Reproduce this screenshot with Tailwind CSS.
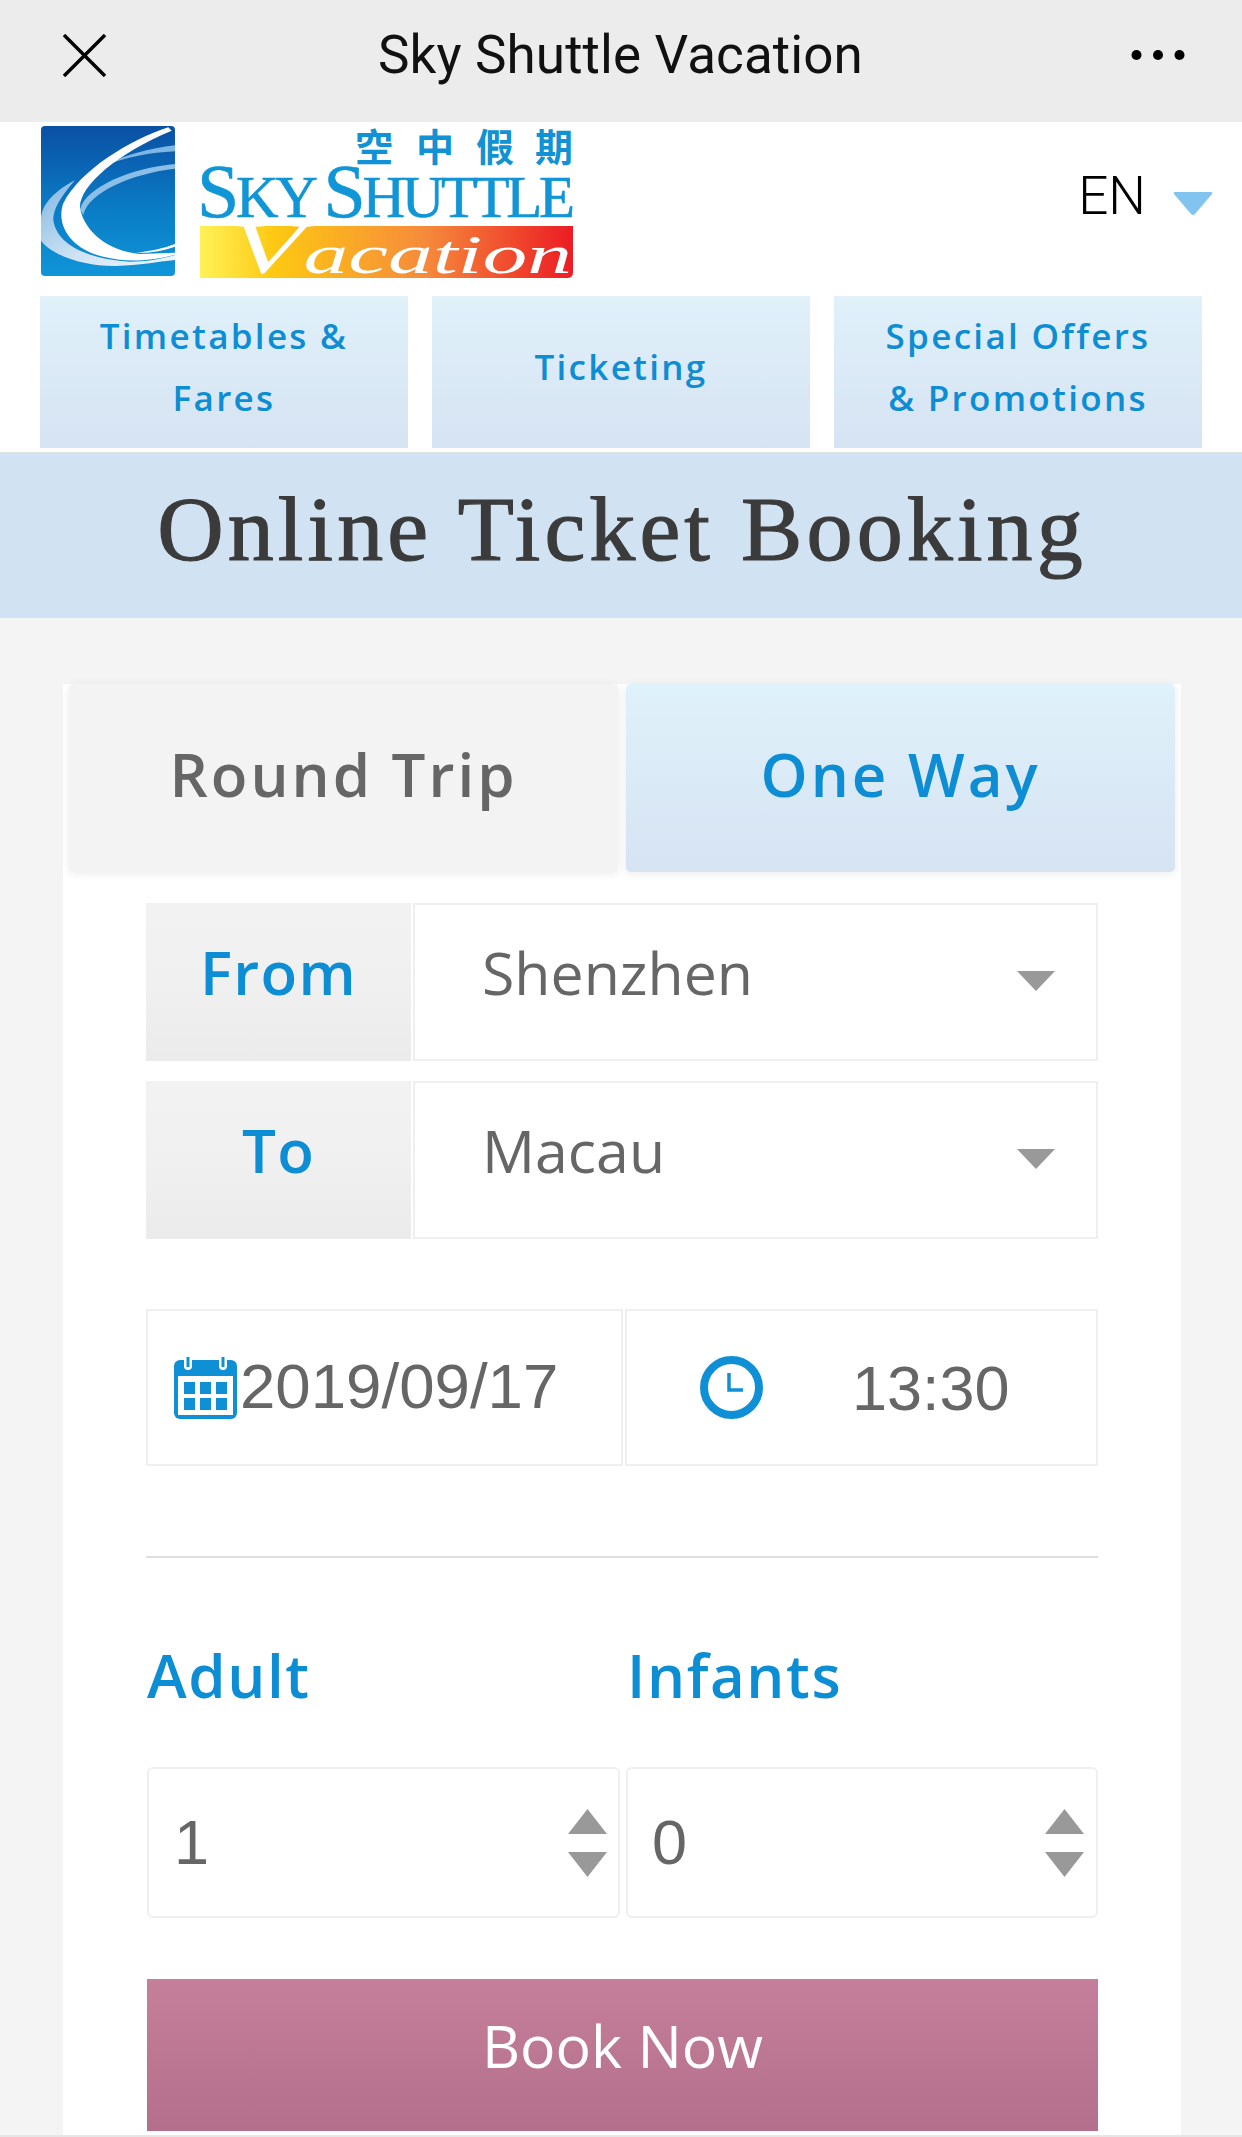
<!DOCTYPE html>
<html>
<head>
<meta charset="utf-8">
<script src="https://cdn.jsdelivr.net/npm/@tailwindcss/browser@4"></script>
</head>
<body class="m-0">
<div class="w-[1242px] h-[2137px] overflow-hidden flex flex-col bg-[#f4f4f4] font-['Open_Sans',sans-serif]">
  <!-- top bar -->
  <div class="h-[122px] shrink-0 bg-[#ececec] flex items-center justify-between pl-[63px] pr-[57px]">
    <svg class="w-[43px] h-[43px] mb-[12px]" viewBox="0 0 43 43"><path d="M1 1L42 42M42 1L1 42" stroke="#000" stroke-width="3.4" fill="none"/></svg>
    <div class="font-['Roboto',sans-serif] text-[53px] tracking-[0.1px] leading-none text-[#111] mb-[12px] ml-[4px]">Sky Shuttle Vacation</div>
    <svg class="w-[54px] h-[12px] mb-[12px]" viewBox="0 0 54 12"><circle cx="5.5" cy="6" r="5" fill="#000"/><circle cx="27" cy="6" r="5" fill="#000"/><circle cx="48.5" cy="6" r="5" fill="#000"/></svg>
  </div>
  <!-- logo row -->
  <div class="h-[174px] shrink-0 bg-white flex items-start justify-between pl-[41px] pr-[29px] pt-[4px]">
    <svg class="overflow-visible" width="534" height="154" viewBox="41 126 534 154">
      <defs>
        <linearGradient id="sq" x1="0" y1="0" x2="0" y2="1"><stop offset="0" stop-color="#0a50a4"/><stop offset=".55" stop-color="#0a7cc5"/><stop offset="1" stop-color="#1095d9"/></linearGradient>
        <linearGradient id="lb" x1="0" y1="0" x2="1" y2="1"><stop offset="0" stop-color="#7fb6e2"/><stop offset=".6" stop-color="#d2e5f4"/><stop offset="1" stop-color="#eef6fb"/></linearGradient>
        <linearGradient id="band" x1="0" y1="0" x2="1" y2="0"><stop offset="0" stop-color="#fff258"/><stop offset=".2" stop-color="#fdc812"/><stop offset=".6" stop-color="#f68b3b"/><stop offset="1" stop-color="#ec1c24"/></linearGradient>
      </defs>
      <g transform="translate(30 120) scale(.3333)">
        <rect x="33" y="18" width="402" height="450" rx="12" fill="url(#sq)"/>
        <path d="M135 180C80 210 33 250 33 300L33 362C70 410 170 440 260 438C330 436 380 425 435 420L435 405C390 418 350 425 300 425C190 420 80 380 70 300C70 270 85 240 135 180Z" fill="url(#lb)"/>
        <path d="M215 140C280 105 360 85 435 76L435 94C360 98 290 110 215 140Z" fill="#7db6e4"/>
        <path d="M150 268C170 200 300 145 435 132L435 146C310 160 175 215 160 285Z" fill="#8cbfe8"/>
        <path d="M415 22C300 60 150 150 100 250C75 320 130 390 220 410C280 425 340 428 435 404L435 398L330 402C240 395 165 340 150 265C145 200 260 100 425 32Z" fill="#fff"/>
        <path d="M318 398C370 392 400 385 435 372L435 380C400 392 360 400 318 398Z" fill="#fff"/>
      </g>
      <text x="355 416 476 535" y="161" font-family="'Noto Sans CJK TC',sans-serif" font-size="38" font-weight="700" fill="#1192d4">空中假期</text>
      <text x="197" y="217" textLength="378" lengthAdjust="spacing" font-family="'Liberation Serif',serif" fill="#1095d6" stroke="#1095d6" stroke-width=".6" font-size="59"><tspan font-size="76">S</tspan>KY <tspan font-size="76">S</tspan>HUTTLE</text>
      <path d="M200 226H573V272Q573 278 567 278H200Z" fill="url(#band)"/>
      <text x="230" y="273" textLength="342" lengthAdjust="spacingAndGlyphs" font-family="'Liberation Serif',serif" font-style="italic" fill="#fff" font-size="55"><tspan font-size="74">V</tspan>acation</text>
    </svg>
    <div class="flex items-center mt-[44px]">
      <span class="font-['Roboto',sans-serif] font-light text-[53px] leading-none text-black">EN</span>
      <svg class="w-[40px] h-[25px] ml-[27px] mt-[13px]" viewBox="0 0 40 25"><path d="M2 1H38Q40 1 39 3L22 23Q20 25 18 23L1 3Q0 1 2 1Z" fill="#82c4f0"/></svg>
    </div>
  </div>
  <!-- nav -->
  <div class="shrink-0 bg-white pl-[40px] flex gap-[24px] h-[152px]">
    <div class="w-[368px] bg-gradient-to-b from-[#e0f1fa] to-[#d6e3f3] flex items-center justify-center text-center text-[#0d8dd3] text-[35px] leading-[62px] font-semibold tracking-[2.3px] pb-[10px]">Timetables &amp;<br>Fares</div>
    <div class="w-[378px] bg-gradient-to-b from-[#e0f1fa] to-[#d6e3f3] flex items-center justify-center text-center text-[#0d8dd3] text-[35px] leading-[62px] font-semibold tracking-[2.3px] pb-[10px]">Ticketing</div>
    <div class="w-[368px] bg-gradient-to-b from-[#e0f1fa] to-[#d6e3f3] flex items-center justify-center text-center text-[#0d8dd3] text-[35px] leading-[62px] font-semibold tracking-[2.3px] pb-[10px]">Special Offers<br>&amp; Promotions</div>
  </div>
  <div class="h-[5px] shrink-0 bg-white border-b border-[#e2e2e2]"></div>
  <!-- heading -->
  <div class="h-[165px] shrink-0 bg-[#d1e3f2] flex items-center justify-center">
    <h1 class="font-['Liberation_Serif',serif] text-[92px] leading-none text-[#3b3b3b] tracking-[4.1px] mb-[14px] ml-[2px] [-webkit-text-stroke:1.2px_#3b3b3b]">Online Ticket Booking</h1>
  </div>
  <!-- card -->
  <div class="flex-1 mt-[66px] ml-[63px] mr-[61px] bg-white flex flex-col">
    <div class="flex gap-[8px] px-[6px]">
      <div class="w-[549px] h-[188px] rounded-[5px] bg-[#f3f3f3] shadow-[0_2px_10px_rgba(0,0,0,0.08)] flex items-center justify-center text-[60px] font-semibold text-[#666] tracking-[3px] pb-[8px]">Round Trip</div>
      <div class="w-[549px] h-[188px] rounded-[5px] bg-gradient-to-b from-[#dff1fa] to-[#d6e3f3] shadow-[0_2px_10px_rgba(0,0,0,0.08)] flex items-center justify-center text-[60px] font-semibold text-[#0d8dd3] tracking-[3px] pb-[8px]">One Way</div>
    </div>
    <div class="px-[83px] flex flex-col flex-1">
      <div class="flex mt-[31px] h-[158px] gap-[2px]">
        <div class="w-[265px] bg-gradient-to-b from-[#f2f2f2] via-[#f0f0f0] to-[#ebebeb] flex items-center justify-center text-[60px] font-semibold tracking-[1.3px] text-[#0d8dd3] pb-[20px]">From</div>
        <div class="flex-1 border-2 border-[#efefef] flex items-center justify-between pl-[67px] pr-[41px]">
          <span class="text-[59px] text-[#666] pb-[20px]">Shenzhen</span>
          <svg class="w-[38px] h-[20px] mb-[2px]" viewBox="0 0 38 20"><path d="M0 0H38L19 20Z" fill="#999"/></svg>
        </div>
      </div>
      <div class="flex mt-[20px] h-[158px] gap-[2px]">
        <div class="w-[265px] bg-gradient-to-b from-[#f2f2f2] via-[#f0f0f0] to-[#ebebeb] flex items-center justify-center text-[60px] font-semibold tracking-[1.3px] text-[#0d8dd3] pb-[20px]">To</div>
        <div class="flex-1 border-2 border-[#efefef] flex items-center justify-between pl-[67px] pr-[41px]">
          <span class="text-[59px] text-[#666] pb-[20px]">Macau</span>
          <svg class="w-[38px] h-[20px] mb-[2px]" viewBox="0 0 38 20"><path d="M0 0H38L19 20Z" fill="#999"/></svg>
        </div>
      </div>
      <div class="flex mt-[70px] h-[157px] gap-[2px] font-['Liberation_Sans',sans-serif] text-[63px] text-[#666]">
        <div class="w-[477px] border-2 border-[#efefef] flex items-center pl-[26px]">
          <svg class="w-[63px] h-[62px] shrink-0" viewBox="0 0 63 62">
            <rect x="0" y="3" width="63" height="59" rx="6" fill="#0f90d6"/>
            <rect x="4" y="19" width="55" height="39" fill="#fff"/>
            <g fill="#0f90d6">
              <rect x="10" y="25" width="11" height="12"/><rect x="26" y="25" width="11" height="12"/><rect x="42" y="25" width="11" height="12"/>
              <rect x="10" y="41" width="11" height="12"/><rect x="26" y="41" width="11" height="12"/><rect x="42" y="41" width="11" height="12"/>
            </g>
            <rect x="10" y="0" width="8" height="13" rx="4" fill="#fff"/><rect x="12.5" y="0" width="3" height="10" fill="#0f90d6"/>
            <rect x="45" y="0" width="8" height="13" rx="4" fill="#fff"/><rect x="47.5" y="0" width="3" height="10" fill="#0f90d6"/>
          </svg>
          <span class="ml-[3px] pb-[4px] text-[63.6px]">2019/09/17</span>
        </div>
        <div class="flex-1 border-2 border-[#efefef] flex items-center pl-[73px]">
          <svg class="w-[63px] h-[63px] shrink-0" viewBox="0 0 63 63"><circle cx="31.5" cy="31.5" r="27.5" fill="none" stroke="#0f90d6" stroke-width="8"/><path d="M29 17V34H43" fill="none" stroke="#0f90d6" stroke-width="3.5"/></svg>
          <span class="ml-[89px] pt-[2px]">13:30</span>
        </div>
      </div>
      <div class="mt-[90px] h-[2px] bg-[#dedede]"></div>
      <div class="grid grid-cols-[473px_1fr] gap-[6px] ml-[1px] mt-[76px] text-[60px] leading-[82px] font-semibold text-[#0d8dd3] tracking-[1.6px]">
        <div>Adult</div>
        <div class="pl-[1px]">Infants</div>
      </div>
      <div class="grid grid-cols-[473px_1fr] gap-[6px] ml-[1px] mt-[51px] font-['Liberation_Sans',sans-serif] text-[63px] text-[#666]">
        <div class="h-[151px] border-2 border-[#efefef] rounded-[6px] flex items-center justify-between pl-[25px] pr-[11px]">
          <span>1</span>
          <svg class="w-[39px] h-[68px]" viewBox="0 0 39 68"><path d="M19.5 0L39 25H0ZM0 43H39L19.5 68Z" fill="#999"/></svg>
        </div>
        <div class="h-[151px] border-2 border-[#efefef] rounded-[6px] flex items-center justify-between pl-[24px] pr-[12px]">
          <span>0</span>
          <svg class="w-[39px] h-[68px]" viewBox="0 0 39 68"><path d="M19.5 0L39 25H0ZM0 43H39L19.5 68Z" fill="#999"/></svg>
        </div>
      </div>
      <div class="mt-[61px] ml-[1px] h-[152px] bg-gradient-to-b from-[#c57f9b] to-[#b36f8b] flex items-center justify-center text-[59px] text-white pb-[20px]">Book Now</div>
    </div>
  </div>
  <div class="h-[2px] shrink-0 bg-[#e6e6e6]"></div>
</div>
</body>
</html>
